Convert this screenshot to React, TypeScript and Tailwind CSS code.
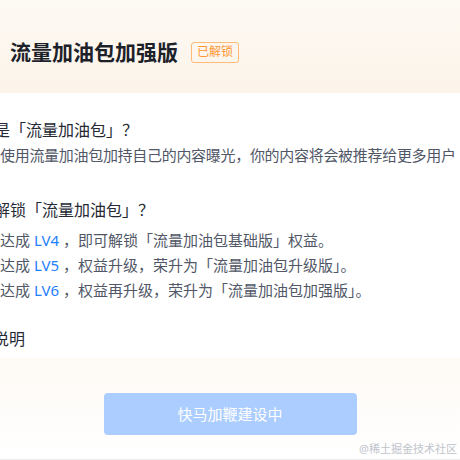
export default function App() {
  return (
    <div
      className="relative w-[460px] h-[460px] overflow-hidden bg-white"
      style={{ fontFamily: '"Noto Sans", "Noto Sans CJK SC", sans-serif' }}
    >
      <Header />
      <Body />
      <Footer />
    </div>
  );
}

function Header() {
  return (
    <div className="h-[93px] bg-gradient-to-b from-[#fdf9f3] to-[#fcf4ea] flex items-center pl-[10px] pt-[11px]">
      <h1 className="text-[21px] font-bold text-[#1d2129] leading-none">流量加油包加强版</h1>
      <span className="ml-[13px] h-[21px] px-[5px] flex items-center rounded-[3px] border border-[#ffba78] text-[12px] text-[#ff9633] leading-none">
        已解锁
      </span>
    </div>
  );
}

function Body() {
  return (
    <div className="h-[265px] overflow-hidden pt-[25px] whitespace-nowrap">
      <h2 className="ml-[-6px] text-[16px] leading-[24px] text-[#252933]">是「流量加油包」？</h2>
      <p className="mt-[1px] text-[15px] leading-[24px] tracking-[-0.3px] text-[#515767]">
        使用流量加油包加持自己的内容曝光，你的内容将会被推荐给更多用户
      </p>

      <h2 className="mt-[31px] ml-[-6px] text-[16px] leading-[24px] text-[#252933]">解锁「流量加油包」？</h2>
      <ul className="mt-[6px] text-[15px] leading-[25px] text-[#515767]">
        <li>
          达成 <span className="text-[#1e80ff]">LV4</span> ，即可解锁「流量加油包基础版」权益。
        </li>
        <li>
          达成 <span className="text-[#1e80ff]">LV5</span> ，权益升级，荣升为「流量加油包升级版」。
        </li>
        <li>
          达成 <span className="text-[#1e80ff]">LV6</span> ，权益再升级，荣升为「流量加油包加强版」。
        </li>
      </ul>

      <h2 className="mt-[24px] ml-[-7px] text-[16px] leading-[24px] text-[#252933]">说明</h2>
    </div>
  );
}

function Footer() {
  return (
    <div className="h-[102px] bg-gradient-to-b from-[#fefaf5] to-white border-b border-[#eeeeee] pt-[35px] flex justify-center">
      <button className="w-[253px] h-[42px] rounded-[4px] bg-[#abcdff] text-white text-[15px]">
        快马加鞭建设中
      </button>
      <span className="absolute right-[3px] bottom-[3px] text-[11px] text-[#c0c4cc]">@稀土掘金技术社区</span>
    </div>
  );
}
